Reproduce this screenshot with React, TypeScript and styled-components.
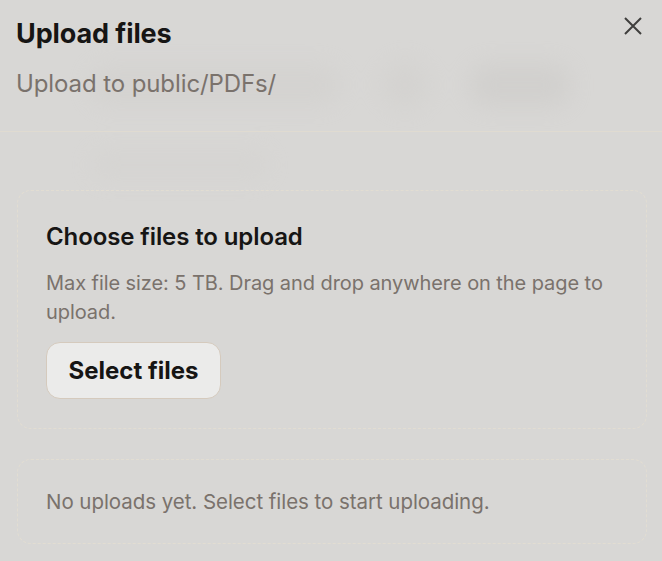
import React from 'react';
import styled, { createGlobalStyle } from 'styled-components';

const GlobalStyle = createGlobalStyle`
  html, body {
    margin: 0;
    padding: 0;
    background: #d8d7d5;
  }
  body {
    font-family: Inter, "Noto Sans", "Liberation Sans", sans-serif;
    -webkit-font-smoothing: antialiased;
  }
`;

const Screen = styled.div`
  position: relative;
  width: 662px;
  height: 561px;
  overflow: hidden;
  background: #d8d7d5;
`;

// the page behind the dialog, dimmed and blurred
const Backdrop = styled.div`
  display: flex;
  flex-direction: column;
  gap: 40px;
  padding: 60px 40px 0 90px;
  filter: blur(12px);
  opacity: 0.3;
`;

const BackRow = styled.div`
  display: flex;
  align-items: center;
  gap: 40px;
`;

const Blob = styled.div<{ $w: number; $h: number; $round?: boolean; $shade?: string }>`
  width: ${(p) => p.$w}px;
  height: ${(p) => p.$h}px;
  border-radius: ${(p) => (p.$round ? '50%' : '14px')};
  background: ${(p) => p.$shade || '#cbc9c6'};
`;

const Dialog = styled.div`
  position: absolute;
  inset: 0;
  display: flex;
  flex-direction: column;
`;

const Header = styled.header`
  position: relative;
  padding: 17px 16px 32px;
  border-bottom: 1px solid #e0dbd1;
  display: flex;
  flex-direction: column;
  gap: 18px;
`;

const Title = styled.h1`
  margin: 0;
  font-size: 27px;
  line-height: 34px;
  font-weight: 700;
  color: #161514;
  letter-spacing: -0.1px;
`;

const Subtitle = styled.p`
  margin: 0;
  font-size: 24px;
  line-height: 30px;
  color: #7a726c;
  letter-spacing: -0.1px;
`;

const CloseButton = styled.button`
  position: absolute;
  top: 14px;
  right: 17px;
  width: 24px;
  height: 24px;
  padding: 0;
  border: none;
  background: transparent;
  color: #3f3e3d;
  display: flex;
  align-items: center;
  justify-content: center;
  cursor: pointer;
`;

const Body = styled.div`
  padding: 58px 15px 0 17px;
  display: flex;
  flex-direction: column;
  gap: 30px;
`;

const Card = styled.section<{ $compact?: boolean }>`
  border: 1px dashed #e2ddd2;
  border-radius: 14px;
  padding: ${(p) => (p.$compact ? '27px 28px' : '30px 28px 29px')};
  display: flex;
  flex-direction: column;
  align-items: flex-start;
`;

const CardTitle = styled.h2`
  margin: 0 0 16px;
  font-size: 24px;
  line-height: 32px;
  font-weight: 600;
  color: #161514;
  letter-spacing: -0.1px;
`;

const Muted = styled.p<{ $wide?: boolean }>`
  margin: 0;
  font-size: ${(p) => (p.$wide ? '20.5px' : '20px')};
  line-height: 29px;
  color: #7a726c;
  letter-spacing: ${(p) => (p.$wide ? '-0.05px' : '-0.07px')};
`;

const SelectButton = styled.button`
  margin-top: 15px;
  width: 175px;
  height: 57px;
  border: 1px solid #d5cabd;
  border-radius: 14px;
  background: #ebebea;
  font-family: inherit;
  font-size: 24px;
  font-weight: 700;
  color: #161514;
  cursor: pointer;
`;

export default function App() {
  return (
    <Screen>
      <GlobalStyle />
      <Backdrop>
        <BackRow>
          <Blob $w={250} $h={40} />
          <Blob $w={50} $h={50} $round />
          <Blob $w={100} $h={44} $shade="#c2c0bd" />
        </BackRow>
        <BackRow>
          <Blob $w={180} $h={30} $shade="#d0cecb" />
        </BackRow>
      </Backdrop>
      <Dialog>
        <Header>
          <Title>Upload files</Title>
          <Subtitle>Upload to public/PDFs/</Subtitle>
          <CloseButton aria-label="Close">
            <svg width="20" height="20" viewBox="0 0 20 20" fill="none">
              <path d="M2 2L18 18M18 2L2 18" stroke="currentColor" strokeWidth="2" />
            </svg>
          </CloseButton>
        </Header>
        <Body>
          <Card>
            <CardTitle>Choose files to upload</CardTitle>
            <Muted>Max file size: 5 TB. Drag and drop anywhere on the page to upload.</Muted>
            <SelectButton>Select files</SelectButton>
          </Card>
          <Card $compact>
            <Muted $wide>No uploads yet. Select files to start uploading.</Muted>
          </Card>
        </Body>
      </Dialog>
    </Screen>
  );
}
